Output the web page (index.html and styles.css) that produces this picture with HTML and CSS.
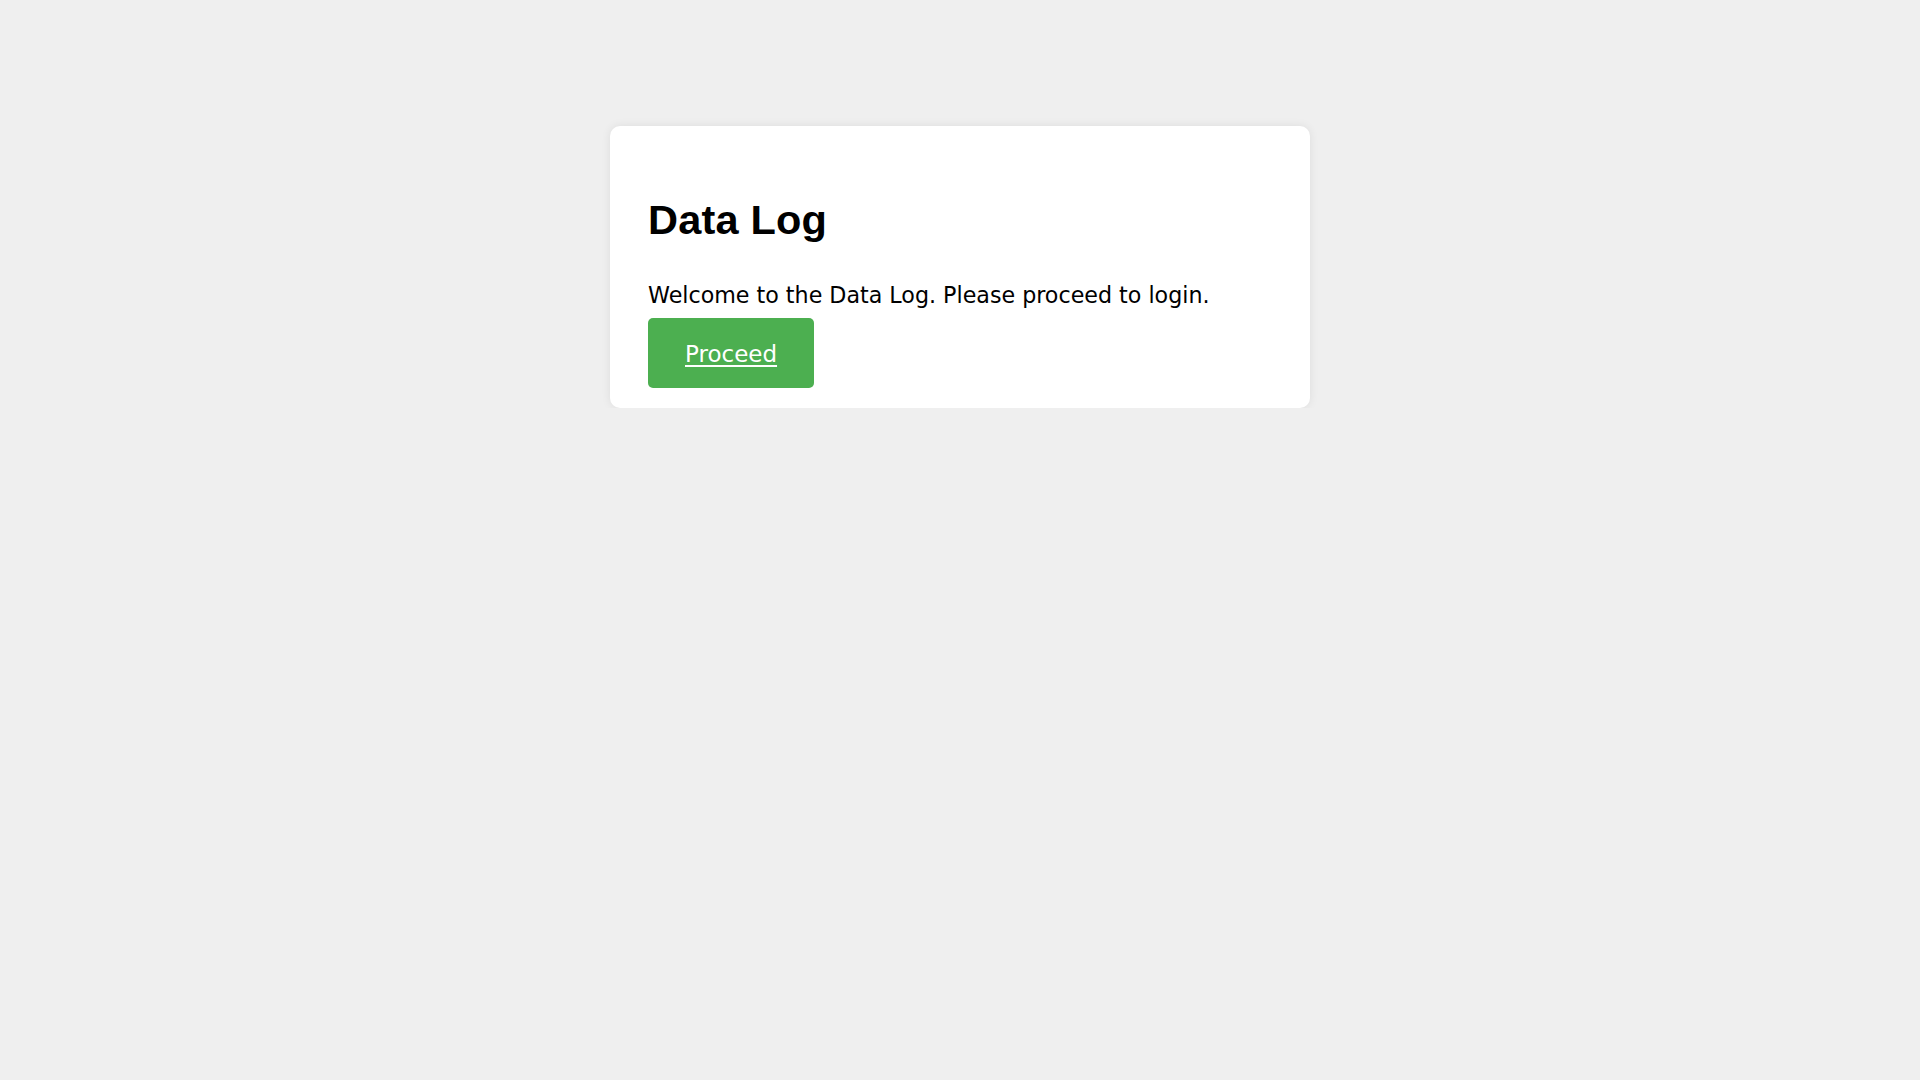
FILE: index.html
```html
<!DOCTYPE html>
<html lang="en">
<head>
<meta charset="utf-8">
<title>Data Log</title>
<link rel="stylesheet" href="styles.css">
</head>
<body>
<main class="card">
  <h1 class="title">Data Log</h1>
  <p class="intro">Welcome to the Data Log. Please proceed to login.</p>
  <a class="btn" href="#">Proceed</a>
</main>
</body>
</html>
```

FILE: styles.css
```css
html, body {
  margin: 0;
  padding: 0;
}
body {
  background: #efefef;
  font-family: "DejaVu Sans", sans-serif;
  color: #000;
  padding-top: 126px;
}
.card {
  box-sizing: border-box;
  width: 700px;
  margin: 0 auto;
  background: #fff;
  border-radius: 10px;
  box-shadow: 0 0 10px rgba(0, 0, 0, 0.08);
  padding: 70px 40px 20px 38px;
  display: flex;
  flex-direction: column;
  align-items: flex-start;
}
.title {
  margin: 0;
  font-family: "Liberation Sans", Arial, sans-serif;
  font-weight: 700;
  font-size: 41.5px;
  line-height: 48px;
  letter-spacing: 0.2px;
}
.intro {
  margin: 38px 0 0;
  font-size: 22.2px;
  line-height: 26px;
}
.btn {
  margin-top: 10px;
  display: block;
  background: #4caf50;
  color: #fff;
  border-radius: 5px;
  font-size: 23px;
  line-height: 26px;
  padding: 23px 37px 21px;
  text-decoration: underline;
  text-underline-offset: 3px;
}
```
